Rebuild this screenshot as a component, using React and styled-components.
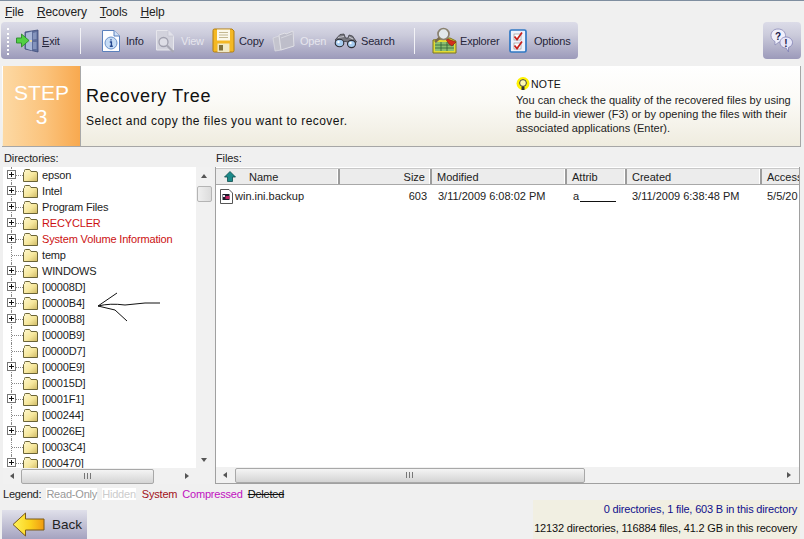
import React from 'react';
import styled, { createGlobalStyle } from 'styled-components';

const GlobalStyle = createGlobalStyle`
	html, body {
		margin: 0;
		padding: 0;
		overflow: hidden;
		background: #f0f0f0;
		font-family: 'Liberation Sans', Arial, sans-serif;
	}
`;

const Page = styled.div`
	width: 804px;
	height: 539px;
	display: flex;
	flex-direction: column;
	position: relative;
	overflow: hidden;
	border-top: 1px solid #7f8ea0;
	box-sizing: border-box;
	font-size: 12px;
	color: #222;
`;

const MenuBar = styled.div`
	height: 21px;
	display: flex;
	align-items: center;
	gap: 13px;
	padding-left: 5px;
	flex: none;
	font-size: 12px;
	letter-spacing: -0.1px;
`;

const ToolRow = styled.div`
	height: 37px;
	display: flex;
	justify-content: space-between;
	padding: 0 3px 0 1px;
	flex: none;
`;

const Toolbar = styled.div`
	width: 577px;
	display: flex;
	align-items: center;
	border-radius: 4px;
	background: linear-gradient(#dcdce8 0%, #cbcbdb 35%, #9c9aba 100%);
	padding-left: 6px;
	box-sizing: border-box;
`;

const Grip = styled.div`
	width: 2px;
	height: 27px;
	margin-top: 1px;
	border-left: 2px dotted #fff;
`;

const ToolSep = styled.div`
	width: 1px;
	height: 26px;
	flex: none;
	background: #f2f2f6;
	margin: 0 ${(p) => p.$right}px 0 ${(p) => p.$left}px;
`;

const ToolItem = styled.div`
	display: flex;
	align-items: center;
	flex: none;
	width: ${(p) => p.$width}px;
	margin-left: ${(p) => p.$left || 0}px;
	color: ${(p) => (p.$disabled ? '#e6e6ee' : '#26263a')};
	font-size: 11px;
	letter-spacing: -0.2px;
	svg { flex: none; }
	span { margin-left: ${(p) => p.$gap}px; }
`;

const HelpButton = styled.div`
	width: 38px;
	display: flex;
	align-items: center;
	justify-content: center;
	border-radius: 4px;
	background: linear-gradient(#dcdce8 0%, #cbcbdb 35%, #9c9aba 100%);
`;

const StepHeader = styled.div`
	margin: 7px 3px 0 2px;
	height: 80px;
	flex: none;
	display: flex;
	border-bottom: 1px solid #a6a6a6;
	border-right: 1px solid #a6a6a6;
	background: linear-gradient(#ffffff 0%, #fbfaf6 45%, #efecdf 100%);
`;

const StepBox = styled.div`
	width: 78px;
	margin-left: 1px;
	background: linear-gradient(90deg, #fdd9a4 0%, #fbc37c 55%, #f8a94f 100%);
	border-right: 1px solid #a8a8a8;
	color: #fff;
	font-size: 21px;
	line-height: 24px;
	text-align: center;
	padding-top: 15px;
	box-sizing: border-box;
`;

const StepTitle = styled.div`
	width: 435px;
	padding: 19px 0 0 5px;
	box-sizing: border-box;
	color: #111;
`;

const StepName = styled.div`
	font-size: 18px;
	line-height: 22px;
	letter-spacing: 0.62px;
`;

const StepDesc = styled.div`
	font-size: 12px;
	line-height: 16px;
	margin-top: 6px;
	letter-spacing: 0.45px;
`;

const NoteBox = styled.div`
	padding-top: 11px;
	font-size: 11px;
	line-height: 14px;
	letter-spacing: 0.02px;
	color: #222;
	white-space: nowrap;
`;

const NoteHead = styled.div`
	display: flex;
	align-items: center;
	gap: 1px;
	height: 14px;
	margin-bottom: 2px;
	font-size: 10.5px;
	letter-spacing: 0.2px;
	color: #111;
`;

const Panes = styled.div`
	flex: none;
	display: flex;
	padding-left: 3px;
	margin-top: 2px;
`;

const PaneCol = styled.div`
	width: ${(p) => p.$width}px;
	margin-left: ${(p) => p.$left || 0}px;
	display: flex;
	flex-direction: column;
`;

const PaneLabel = styled.div`
	height: 18px;
	line-height: 18px;
	font-size: 11px;
	letter-spacing: -0.1px;
	padding-left: ${(p) => p.$pad || 1}px;
	flex: none;
`;

const TreeFrame = styled.div`
	height: 317px;
	display: flex;
	flex-direction: column;
	background: #fff;
`;

const TreeBody = styled.div`
	flex: 1;
	display: flex;
	min-height: 0;
`;

const TreeList = styled.div`
	flex: 1;
	overflow: hidden;
`;

const TreeRow = styled.div`
	height: 16px;
	display: flex;
	align-items: center;
	font-size: 11px;
	letter-spacing: -0.16px;
	color: ${(p) => (p.$system ? '#cc1111' : '#1c1c1c')};
`;

const TreeLines = styled.div`
	width: 20px;
	height: 16px;
	flex: none;
	position: relative;
	&::before {
		content: '';
		position: absolute;
		left: 8px;
		top: 0;
		bottom: 0;
		border-left: 1px dotted #888;
	}
	&::after {
		content: '';
		position: absolute;
		left: 9px;
		right: 0;
		top: 8px;
		border-top: 1px dotted #888;
	}
`;

const Expander = styled.div`
	position: absolute;
	left: 4px;
	top: 3px;
	width: 9px;
	height: 9px;
	box-sizing: border-box;
	border: 1px solid #777;
	background: #fff;
	z-index: 1;
	&::before {
		content: '';
		position: absolute;
		left: 1px;
		right: 1px;
		top: 3px;
		height: 1px;
		background: #111;
	}
	&::after {
		content: '';
		position: absolute;
		top: 1px;
		bottom: 1px;
		left: 3px;
		width: 1px;
		background: #111;
	}
`;

const TreeText = styled.span`
	margin-left: 4px;
	white-space: nowrap;
`;

const VBar = styled.div`
	width: 16px;
	flex: none;
	background: #f1f1f1;
	display: flex;
	flex-direction: column;
	align-items: center;
`;

const VThumb = styled.div`
	width: 15px;
	height: 16px;
	margin-top: 8px;
	box-sizing: border-box;
	border: 1px solid #b4b4b4;
	border-radius: 2px;
	background: linear-gradient(90deg, #efefef, #dcdcdc);
`;

const HBar = styled.div`
	height: 16px;
	flex: none;
	display: flex;
	align-items: center;
	background: #f1f1f1;
`;

const HThumb = styled.div`
	width: ${(p) => p.$width}px;
	margin-left: ${(p) => p.$left}px;
	height: 15px;
	box-sizing: border-box;
	border: 1px solid #a8a8a8;
	border-radius: 2px;
	background: linear-gradient(#f4f4f4, #d4d4d4);
	display: flex;
	align-items: center;
	justify-content: center;
	gap: 1px;
	i {
		display: block;
		width: 1px;
		height: 6px;
		background: #777;
		margin-right: 1px;
	}
`;

const Arrow = styled.div`
	width: 0;
	height: 0;
	flex: none;
	border: 3px solid transparent;
	margin: ${(p) => p.$margin || '0'};
	${(p) => p.$dir === 'up' && 'border-top: 0; border-bottom: 4px solid #555;'}
	${(p) => p.$dir === 'down' && 'border-bottom: 0; border-top: 4px solid #555;'}
	${(p) => p.$dir === 'left' && 'border-left: 0; border-right: 4px solid #555;'}
	${(p) => p.$dir === 'right' && 'border-right: 0; border-left: 4px solid #555;'}
`;

const Spacer = styled.div`
	flex: 1;
`;

const FilesFrame = styled.div`
	height: 317px;
	display: flex;
	flex-direction: column;
	background: #fff;
	border-left: 1px solid #a0a0a0;
	border-right: 1px solid #a0a0a0;
	border-bottom: 1px solid #a0a0a0;
	box-sizing: border-box;
	overflow: hidden;
`;

const GridHead = styled.div`
	height: 17px;
	margin-top: 1px;
	display: flex;
	flex: none;
	background: #ececec;
	border-top: 1px solid #c8c8c8;
	border-bottom: 1px solid #a8a8a8;
	box-sizing: border-box;
	font-size: 11px;
`;

const GridRow = styled.div`
	display: flex;
	height: 22px;
	align-items: center;
	font-size: 11px;
	color: #222;
	flex: none;
`;

const Cell = styled.div`
	width: ${(p) => p.$width}px;
	flex: none;
	box-sizing: border-box;
	white-space: nowrap;
	overflow: hidden;
	display: flex;
	align-items: center;
	justify-content: ${(p) => (p.$right ? 'flex-end' : 'flex-start')};
	padding: 0 ${(p) => (p.$right ? 5 : 0)}px 0 ${(p) => p.$pad || 0}px;
	${(p) => p.$head && 'border-right: 2px solid #9c9c9c; box-shadow: inset -1px 0 0 #fff;'}
`;

const NameLabel = styled.span`
	margin-left: ${(p) => p.$left}px;
`;

const AttrBlank = styled.span`
	display: inline-block;
	width: 36px;
	height: 10px;
	margin-left: 1px;
	border-bottom: 1px solid #111;
`;

const FilesBody = styled.div`
	flex: 1;
`;

const BottomRow = styled.div`
	flex: 1;
	display: flex;
	min-height: 0;
	justify-content: space-between;
`;

const LeftBottom = styled.div`
	display: flex;
	flex-direction: column;
	justify-content: space-between;
`;

const Legend = styled.div`
	display: flex;
	padding: 2px 0 0 3px;
	height: 16px;
	align-items: center;
	gap: 5px;
	font-size: 11px;
	letter-spacing: -0.2px;
`;

const LegendItem = styled.span`
	color: ${(p) => p.$color};
	background: ${(p) => p.$bg || 'transparent'};
	text-decoration: ${(p) => (p.$strike ? 'line-through' : 'none')};
	margin-left: ${(p) => p.$left || 0}px;
`;

const BackButton = styled.div`
	width: 85px;
	height: 29px;
	margin-left: 2px;
	display: flex;
	align-items: center;
	gap: 7px;
	padding-left: 10px;
	box-sizing: border-box;
	font-size: 13.5px;
	color: #222;
	background: linear-gradient(#e0e0ea, #a5a3c0);
`;

const StatusBox = styled.div`
	width: 267px;
	height: 39px;
	margin: auto 4px 0 0;
	background: #f1efe2;
	font-size: 11px;
	letter-spacing: -0.17px;
	text-align: right;
	padding-right: 3px;
	box-sizing: border-box;
`;

const StatusLine = styled.div`
	height: 19px;
	line-height: 19px;
	white-space: nowrap;
	color: ${(p) => p.$color};
`;

const Scribble = styled.svg`
	position: absolute;
	left: 90px;
	top: 285px;
	pointer-events: none;
`;

const Folder = () => (
	<svg width="15" height="15" viewBox="0 0 15 15">
		<defs>
			<linearGradient id="fld" x1="0" y1="0" x2="1" y2="1">
				<stop offset="0" stopColor="#fff9d0" />
				<stop offset="0.55" stopColor="#f6e79c" />
				<stop offset="1" stopColor="#cdb862" />
			</linearGradient>
		</defs>
		<path d="M1.5 3.5 L1.5 2.5 Q1.5 1.5 2.5 1.5 L6 1.5 Q7 1.5 7.5 2.5 L8 3.5 L13 3.5 Q14.5 3.5 14.5 5 L14.5 13.5 L0.5 13.5 L0.5 4.5 Z" fill="url(#fld)" stroke="#6a6438" strokeWidth="1" />
	</svg>
);

const ExitIcon = () => (
	<svg width="23" height="24" viewBox="0 0 23 24">
		<path d="M9 3 L22 1 L22 23 L9 20 Z" fill="#5f6f9c" stroke="#3c4a78" strokeWidth="0.8" />
		<path d="M10 4 L16 2.5 L16 21.5 L10 19.5 Z" fill="#aab8d8" />
		<path d="M17 4 L20.5 3 L20.5 10 L17 10.5 Z M17 13 L20.5 13 L20.5 20 L17 20 Z" fill="#8494bc" />
		<circle cx="15" cy="12" r="0.9" fill="#ffe98a" />
		<path d="M0.5 9 L5.5 9 L5.5 5 L13 11.5 L5.5 18 L5.5 14 L0.5 14 Z" fill="#52d044" stroke="#2a8a2a" strokeWidth="0.9" />
	</svg>
);

const InfoIcon = () => (
	<svg width="20" height="24" viewBox="0 0 20 24">
		<path d="M1.5 1.5 L13 1.5 L18.5 7 L18.5 22.5 L1.5 22.5 Z" fill="#fdfdff" stroke="#5b80bc" />
		<path d="M13 1.5 L13 7 L18.5 7" fill="#cfe0f6" stroke="#5b80bc" />
		<circle cx="10" cy="14" r="6" fill="#c6dcf6" stroke="#6d94cc" />
		<path d="M10 10.2 L10 11.6 M8.8 13 L10.4 13 L10.4 17 M8.8 17.2 L11.8 17.2" stroke="#24468e" strokeWidth="1.4" fill="none" />
	</svg>
);

const ViewIcon = () => (
	<svg width="20" height="24" viewBox="0 0 20 24">
		<path d="M1.5 1.5 L13 1.5 L18.5 7 L18.5 21 L1.5 21 Z" fill="#d2d2dc" stroke="#e6e6ec" />
		<path d="M13 1.5 L13 7 L18.5 7" fill="#e2e2ea" stroke="#c0c0cc" strokeWidth="0.6" />
		<circle cx="8.5" cy="13" r="4.5" fill="#dedee6" stroke="#a0a0ae" strokeWidth="1.3" />
		<path d="M12 16.5 L18.5 23" stroke="#a8a8b4" strokeWidth="2.2" />
	</svg>
);

const CopyIcon = () => (
	<svg width="23" height="25" viewBox="0 0 23 25">
		<path d="M1 2.5 Q1 1 2.5 1 L20 1 L22 3 L22 22.5 Q22 24 20.5 24 L2.5 24 Q1 24 1 22.5 Z" fill="#f4b824" stroke="#b07c10" />
		<rect x="5" y="1.5" width="13" height="11" fill="#fbf8ec" />
		<path d="M7 4.5 L16 4.5 M7 7 L16 7 M7 9.5 L16 9.5" stroke="#c4b892" />
		<rect x="5.5" y="15.5" width="12" height="8.5" fill="#f0e8c4" />
		<rect x="7" y="17" width="4" height="5.5" fill="#80703a" />
	</svg>
);

const OpenIcon = () => (
	<svg width="23" height="24" viewBox="0 0 23 24">
		<path d="M1 9 L7 7 L9 21 L3 22 Z" fill="#c4c4ce" stroke="#dedee4" strokeWidth="0.7" />
		<path d="M7 6 L13 4 L14 5 L21 2 L22 17 L9 21 Z" fill="#bebeca" stroke="#e0e0e6" />
		<path d="M9 9 L20 5" stroke="#d6d6de" />
	</svg>
);

const BinocularsIcon = () => (
	<svg width="23" height="16" viewBox="0 0 23 16">
		<path d="M1 7 L6 1.5 L10 1 L11.5 5 L14 5 L15 2 L18.5 3 L22.5 9 L18 11 L12 8.5 L9 8.5 L5 11 Z" fill="#77777f" stroke="#33333a" strokeWidth="0.7" />
		<path d="M4 4.5 L10 3.5 M15 4 L19 6" stroke="#c6c6ce" strokeWidth="1.2" />
		<ellipse cx="5.5" cy="10" rx="4.3" ry="3.8" fill="#a8cdf0" stroke="#2c2c34" strokeWidth="1.1" />
		<ellipse cx="17.5" cy="11" rx="4" ry="3.6" fill="#a8cdf0" stroke="#2c2c34" strokeWidth="1.1" />
		<circle cx="4.5" cy="9" r="1.2" fill="#fff" />
		<circle cx="16.5" cy="10" r="1.2" fill="#fff" />
	</svg>
);

const ExplorerIcon = () => (
	<svg width="25" height="27" viewBox="0 0 25 27">
		<path d="M1 13 L18 11 L24 14 L24 26 L1 26 Z" fill="#e4dc34" stroke="#7a7420" />
		<rect x="3" y="15" width="19" height="9" fill="#8cc070" />
		<path d="M3 18 L22 18 M3 21 L22 21 M9 15 L9 24 M15 15 L15 24" stroke="#2f6038" strokeWidth="0.8" />
		<path d="M13 11 L24 15 L20 19 L17 17 Z" fill="#d4301c" stroke="#7a1a10" strokeWidth="0.6" />
		<circle cx="11.5" cy="7" r="5.5" fill="#e2e8ec" stroke="#8a8270" strokeWidth="1.7" />
		<path d="M7.5 11 L3 15" stroke="#7a6a4a" strokeWidth="2.4" />
	</svg>
);

const OptionsIcon = () => (
	<svg width="18" height="24" viewBox="0 0 18 24">
		<rect x="1" y="1" width="16" height="22" rx="1.5" fill="#eef2fc" stroke="#2f78c4" strokeWidth="1.7" />
		<rect x="5" y="5" width="7" height="6" fill="#fff" stroke="#888" strokeWidth="0.6" />
		<rect x="5" y="14" width="7" height="6" fill="#fff" stroke="#888" strokeWidth="0.6" />
		<path d="M5.5 7.5 L8 10.5 L13 3.5 M5.5 16.5 L8 19.5 L13 12.5" fill="none" stroke="#c8201c" strokeWidth="1.7" />
	</svg>
);

const HelpIcon = () => (
	<svg width="24" height="26" viewBox="0 0 24 26">
		<path d="M8 1 C3.5 1 1 4 1 7.5 C1 10.5 3 12.5 5 13.5 L5 17 L9 14 C13 14 15.5 11 15.5 7.5 C15.5 4 12.5 1 8 1 Z" fill="#f0f0fb" stroke="#8a8ab8" strokeWidth="0.8" />
		<path d="M16 9 C12.5 9 10 11.5 10 14.5 C10 17.5 12.5 20 16 20 L18.5 24 L18.5 19.5 C21 18.5 22.5 16.8 22.5 14.5 C22.5 11.5 19.5 9 16 9 Z" fill="#e6e6f8" stroke="#8080b4" strokeWidth="0.8" />
		<text x="5" y="11.5" fontSize="10" fontWeight="700" fontFamily="Liberation Sans" fill="#1a1a4a">?</text>
		<text x="14.3" y="18.5" fontSize="10" fontWeight="700" fontFamily="Liberation Sans" fill="#1a1a4a">!</text>
	</svg>
);

const BulbIcon = () => (
	<svg width="14" height="15" viewBox="0 0 14 15">
		<circle cx="7" cy="6.5" r="6.5" fill="#fff200" />
		<circle cx="7" cy="6" r="3.4" fill="#fff9b0" stroke="#333" strokeWidth="0.9" />
		<path d="M5.5 9.5 L8.5 9.5 L8.5 13 L5.5 13 Z" fill="#333" />
	</svg>
);

const FileIcon = () => (
	<svg width="13" height="15" viewBox="0 0 13 15">
		<path d="M0.5 0.5 L9 0.5 L12.5 4 L12.5 14.5 L0.5 14.5 Z" fill="#fff" stroke="#555" />
		<rect x="2.5" y="5" width="7" height="6" fill="#1a1a2a" />
		<rect x="5.5" y="7" width="4" height="3" fill="#c02060" />
		<rect x="3" y="6" width="2" height="2" fill="#e8e8f0" />
	</svg>
);

const SortUp = () => (
	<svg width="12" height="11" viewBox="0 0 12 11">
		<path d="M6 0.5 L11.5 6 L8.5 6 L8.5 10.5 L3.5 10.5 L3.5 6 L0.5 6 Z" fill="#1c8a8a" stroke="#0c4c4c" strokeWidth="0.8" />
	</svg>
);

const BackArrow = () => (
	<svg width="33" height="25" viewBox="0 0 33 25">
		<defs>
			<linearGradient id="bk" x1="0" y1="0" x2="1" y2="0">
				<stop offset="0" stopColor="#fff35a" />
				<stop offset="0.55" stopColor="#fbd21e" />
				<stop offset="1" stopColor="#f09a10" />
			</linearGradient>
		</defs>
		<path d="M1 12.5 L13.5 1 L13.5 7 L32 7 L32 18 L13.5 18 L13.5 24 Z" fill="url(#bk)" stroke="#7a5a18" />
	</svg>
);

const tools = [
	{ label: 'Info', icon: <InfoIcon />, width: 54, gap: 5 },
	{ label: 'View', icon: <ViewIcon />, width: 57, gap: 6, disabled: true },
	{ label: 'Copy', icon: <CopyIcon />, width: 60, gap: 4 },
	{ label: 'Open', icon: <OpenIcon />, width: 62, gap: 5, disabled: true },
	{ label: 'Search', icon: <BinocularsIcon />, width: 80, gap: 4 },
];

const tree = [
	['epson', true],
	['Intel', true],
	['Program Files', true],
	['RECYCLER', true, true],
	['System Volume Information', true, true],
	['temp', false],
	['WINDOWS', true],
	['[00008D]', true],
	['[0000B4]', true],
	['[0000B8]', true],
	['[0000B9]', false],
	['[0000D7]', false],
	['[0000E9]', true],
	['[00015D]', false],
	['[0001F1]', true],
	['[000244]', false],
	['[00026E]', true],
	['[0003C4]', false],
	['[000470]', true],
];

export default function App() {
	return (
		<Page>
			<GlobalStyle />
			<MenuBar>
				<span><u>F</u>ile</span>
				<span><u>R</u>ecovery</span>
				<span><u>T</u>ools</span>
				<span><u>H</u>elp</span>
			</MenuBar>
			<ToolRow>
				<Toolbar>
					<Grip />
					<ToolItem $width={60} $gap={3} $left={5}>
						<ExitIcon />
						<span><u>E</u>xit</span>
					</ToolItem>
					<ToolSep $left={4} $right={20} />
					{tools.map((t) => (
						<ToolItem key={t.label} $width={t.width} $gap={t.gap} $disabled={t.disabled}>
							{t.icon}
							<span>{t.label}</span>
						</ToolItem>
					))}
					<ToolSep $left={0} $right={17} />
					<ToolItem $width={77} $gap={3}>
						<ExplorerIcon />
						<span>Explorer</span>
					</ToolItem>
					<ToolItem $width={60} $gap={7}>
						<OptionsIcon />
						<span>Options</span>
					</ToolItem>
				</Toolbar>
				<HelpButton>
					<HelpIcon />
				</HelpButton>
			</ToolRow>
			<StepHeader>
				<StepBox>
					STEP
					<br />
					3
				</StepBox>
				<StepTitle>
					<StepName>Recovery Tree</StepName>
					<StepDesc>Select and copy the files you want to recover.</StepDesc>
				</StepTitle>
				<NoteBox>
					<NoteHead>
						<BulbIcon />
						NOTE
					</NoteHead>
					You can check the quality of the recovered files by using
					<br />
					the build-in viewer (F3) or by opening the files with their
					<br />
					associated applications (Enter).
				</NoteBox>
			</StepHeader>
			<Panes>
				<PaneCol $width={209}>
					<PaneLabel>Directories:</PaneLabel>
					<TreeFrame>
						<TreeBody>
							<TreeList>
								{tree.map(([name, plus, system]) => (
									<TreeRow key={name} $system={system}>
										<TreeLines>{plus && <Expander />}</TreeLines>
										<Folder />
										<TreeText>{name}</TreeText>
									</TreeRow>
								))}
							</TreeList>
							<VBar>
								<Arrow $dir="up" $margin="7px 0 0" />
								<VThumb />
								<Spacer />
								<Arrow $dir="down" $margin="0 0 6px" />
							</VBar>
						</TreeBody>
						<HBar>
							<Arrow $dir="left" $margin="0 0 0 7px" />
							<HThumb $left={7} $width={133}>
								<i />
								<i />
								<i />
							</HThumb>
							<Spacer />
							<Arrow $dir="right" $margin="0 23px 0 0" />
						</HBar>
					</TreeFrame>
				</PaneCol>
				<PaneCol $width={585} $left={3}>
					<PaneLabel $pad={1}>Files:</PaneLabel>
					<FilesFrame>
						<GridHead>
							<Cell $head $width={124} $pad={8}>
								<SortUp />
								<NameLabel $left={13}>Name</NameLabel>
							</Cell>
							<Cell $head $width={92} $right>Size</Cell>
							<Cell $head $width={135} $pad={5}>Modified</Cell>
							<Cell $head $width={60} $pad={5}>Attrib</Cell>
							<Cell $head $width={135} $pad={5}>Created</Cell>
							<Cell $width={38} $pad={5}>Access</Cell>
						</GridHead>
						<GridRow>
							<Cell $width={124} $pad={4}>
								<FileIcon />
								<NameLabel $left={2}>win.ini.backup</NameLabel>
							</Cell>
							<Cell $width={92} $right>603</Cell>
							<Cell $width={135} $pad={6}>3/11/2009 6:08:02 PM</Cell>
							<Cell $width={60} $pad={6}>
								a
								<AttrBlank />
							</Cell>
							<Cell $width={135} $pad={5}>3/11/2009 6:38:48 PM</Cell>
							<Cell $width={38} $pad={5}>5/5/20</Cell>
						</GridRow>
						<FilesBody />
						<HBar>
							<Arrow $dir="left" $margin="0 0 0 7px" />
							<HThumb $left={8} $width={350}>
								<i />
								<i />
								<i />
							</HThumb>
							<Spacer />
							<Arrow $dir="right" $margin="0 8px 0 0" />
						</HBar>
					</FilesFrame>
				</PaneCol>
			</Panes>
			<BottomRow>
				<LeftBottom>
					<Legend>
						<span>Legend:</span>
						<LegendItem $color="#999" $bg="#fff">Read-Only</LegendItem>
						<LegendItem $color="#ccc" $bg="#fff">Hidden</LegendItem>
						<LegendItem $color="#a01020" $left={1}>System</LegendItem>
						<LegendItem $color="#c010c0">Compressed</LegendItem>
						<LegendItem $color="#111" $strike>Deleted</LegendItem>
					</Legend>
					<BackButton>
						<BackArrow />
						Back
					</BackButton>
				</LeftBottom>
				<StatusBox>
					<StatusLine $color="#10108c">0 directories, 1 file, 603 B in this directory</StatusLine>
					<StatusLine $color="#111">12132 directories, 116884 files, 41.2 GB in this recovery</StatusLine>
				</StatusBox>
			</BottomRow>
			<Scribble width="80" height="42" viewBox="90 285 80 42">
				<path d="M98 305 L117 292 M98 305 Q110 302 125 304 L145 302 L160 302 M98 305 L115 309 L127 320" fill="none" stroke="#111" strokeWidth="1" />
			</Scribble>
		</Page>
	);
}
